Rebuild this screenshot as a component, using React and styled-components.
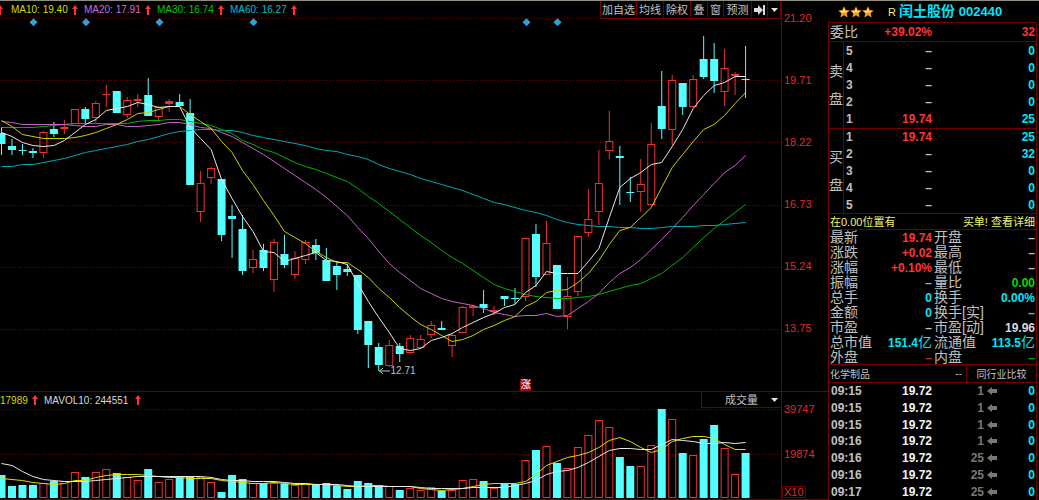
import React from "react";
import styled, { createGlobalStyle } from "styled-components";

const c = {
  line: "#700000",
  red: "#ff3434",
  axis: "#e02a2a",
  cyan: "#00e6fa",
  candle: "#55ffff",
  green: "#00dc00",
  grey: "#c0c0c0",
  dim: "#787878",
  white: "#f4f4f4",
  yellow: "#d8d800",
  note: "#f0f070",
  violet: "#d868d8",
};

const GlobalStyle = createGlobalStyle`
  * { box-sizing: border-box; }
  body {
    margin: 0;
    background: #000;
    color: ${c.grey};
    font-family: "Liberation Sans", "Noto Sans CJK SC", sans-serif;
    font-size: 12px;
  }
  button, select { font: inherit; color: inherit; background: #000; margin: 0; padding: 0; border: 0; border-radius: 0; }
  table { border-collapse: collapse; width: 100%; }
  th, td { padding: 0; text-align: left; font-weight: inherit; }
  dl, dd, dt, h1 { margin: 0; }
`;

/* ---------- data ---------- */

const STEP = 10.48;
const xAt = (i) => 1.5 + STEP * i;

// kind, high, body top, body bottom, low
const candles = [
  ["c", 127, 133, 144, 155], ["c", 139, 146, 150, 155], ["c", 144, 150, 151, 155], ["c", 148, 151, 153, 158],
  ["r", 131, 132, 153, 158], ["c", 122, 129, 134, 137], ["r", 120, 127, 129, 134], ["r", 109, 109, 124, 124],
  ["c", 107, 109, 119, 124], ["r", 101, 103, 118, 123], ["r", 85, 94, 95, 107], ["c", 91, 91, 113, 113],
  ["r", 97, 100, 115, 118], ["r", 94, 99, 101, 107], ["c", 78, 95, 116, 116], ["r", 106, 107, 117, 122],
  ["r", 99, 101, 104, 112], ["c", 94, 102, 106, 106], ["c", 99, 113, 185, 185], ["r", 171, 183, 212, 222],
  ["r", 167, 168, 178, 184], ["c", 179, 179, 235, 241], ["c", 205, 216, 219, 258], ["c", 215, 229, 271, 275],
  ["r", 250, 259, 268, 273], ["c", 244, 250, 268, 271], ["r", 239, 242, 280, 292], ["c", 235, 254, 265, 268],
  ["r", 251, 258, 275, 279], ["r", 240, 242, 260, 264], ["c", 239, 245, 253, 260], ["c", 248, 260, 281, 281],
  ["c", 263, 266, 275, 290], ["c", 264, 269, 272, 276], ["c", 275, 275, 330, 334], ["c", 321, 321, 345, 368],
  ["c", 343, 347, 365, 371], ["r", 340, 345, 366, 367], ["c", 343, 346, 354, 362], ["r", 335, 338, 353, 354],
  ["r", 335, 339, 348, 348], ["r", 321, 325, 335, 338], ["c", 321, 328, 330, 330], ["r", 333, 335, 346, 357],
  ["r", 306, 307, 333, 333], ["r", 305, 306, 308, 316], ["c", 290, 304, 308, 313], ["r", 306, 310, 312, 315],
  ["c", 296, 296, 299, 306], ["c", 288, 298, 299, 304], ["r", 238, 238, 297, 301], ["c", 224, 234, 277, 287],
  ["r", 221, 243, 275, 275], ["c", 265, 265, 309, 309], ["r", 277, 296, 317, 329], ["r", 236, 236, 292, 296],
  ["r", 189, 219, 233, 237], ["r", 150, 183, 212, 225], ["r", 111, 141, 151, 159], ["c", 146, 156, 158, 205],
  ["c", 177, 192, 193, 202], ["r", 159, 184, 192, 212], ["r", 123, 144, 205, 205], ["c", 71, 106, 129, 139],
  ["r", 75, 80, 130, 145], ["c", 83, 83, 107, 115], ["r", 75, 79, 107, 107], ["c", 36, 59, 77, 79],
  ["c", 43, 59, 81, 93], ["r", 49, 68, 92, 106], ["r", 72, 74, 76, 95], ["c", 46, 79, 80, 98],
];

const volumes = [
  475, 486, 485, 485, 483, 481, 481, 472, 477, 472, 469, 473, 477, 480, 469, 482, 479, 476, 477, 477, 482, 492, 475, 479,
  483, 483, 483, 484, 485, 483, 484, 483, 486, 489, 481, 483, 485, 486, 490, 488, 490, 487, 491, 490, 480, 479, 481, 488,
  483, 484, 460, 450, 446, 463, 468, 447, 435, 420, 427, 457, 466, 466, 445, 409, 419, 453, 455, 439, 425, 448, 474, 453,
];

const ma5 = [
  132, 136, 142, 145, 146, 145, 140, 132, 124, 119, 110, 108, 106, 102, 104, 107, 106, 106, 127, 138, 149, 179, 198, 216,
  231, 251, 252, 261, 258, 255, 252, 260, 261, 264, 283, 301, 317, 332, 348, 350, 348, 340, 337, 333, 327, 322, 317, 313,
  307, 304, 292, 285, 271, 273, 273, 273, 261, 248, 217, 187, 178, 172, 164, 162, 146, 129, 108, 95, 85, 82, 76, 76,
];
const ma10 = [
  120, 126, 134, 136, 138, 138, 138, 137, 135, 132, 128, 124, 119, 113, 112, 109, 106, 106, 114, 121, 128, 141, 152, 170,
  184, 200, 215, 231, 237, 243, 251, 257, 262, 262, 269, 277, 288, 297, 307, 316, 324, 329, 335, 341, 339, 335, 329, 325,
  320, 316, 306, 301, 292, 290, 289, 282, 273, 260, 244, 230, 227, 217, 207, 187, 167, 154, 141, 129, 124, 115, 103, 92,
];
const ma20 = [
  121, 122, 124, 124, 124, 124, 124, 125, 126, 126, 124, 124, 126, 126, 125, 124, 122, 122, 124, 127, 128, 132, 136, 142,
  148, 154, 161, 168, 175, 182, 189, 197, 206, 215, 227, 238, 251, 263, 272, 280, 288, 293, 298, 301, 303, 305, 308, 312,
  314, 316, 315, 315, 313, 316, 315, 308, 301, 293, 282, 273, 267, 259, 249, 239, 228, 217, 205, 194, 183, 172, 165, 155,
];
const ma30 = [
  127, 127, 127, 127, 126, 125, 124, 123, 123, 123, 123, 123, 123, 121, 120, 120, 119, 119, 121, 123, 125, 129, 133, 140,
  144, 149, 152, 157, 162, 166, 169, 173, 177, 181, 188, 196, 203, 211, 219, 227, 235, 242, 250, 257, 263, 270, 277, 284,
  288, 291, 294, 296, 297, 298, 298, 297, 296, 294, 291, 288, 285, 283, 278, 273, 265, 257, 247, 237, 228, 220, 212, 204,
];
const ma60 = [
  166, 166, 164, 164, 162, 160, 158, 155, 152, 150, 148, 146, 144, 141, 139, 136, 133, 131, 130, 129, 129, 130, 130, 132,
  135, 137, 139, 141, 143, 145, 148, 150, 151, 154, 156, 159, 164, 168, 171, 174, 178, 181, 184, 187, 190, 194, 198, 202,
  204, 207, 210, 212, 215, 219, 222, 224, 225, 226, 226, 227, 227, 228, 228, 227, 226, 226, 226, 225, 225, 224, 223, 222,
];
const vol5 = [
  478, 479, 480, 482, 483, 484, 483, 480, 480, 477, 475, 474, 474, 474, 475, 476, 477, 477, 478, 478, 478, 480, 481, 482,
  483, 483, 482, 483, 484, 484, 484, 484, 485, 486, 486, 485, 485, 486, 486, 486, 488, 489, 490, 489, 488, 486, 484, 483,
  483, 483, 481, 474, 465, 461, 457, 455, 452, 447, 440, 437, 441, 447, 452, 449, 441, 438, 436, 436, 438, 444, 449, 449,
];
const vol10 = [
  463, 465, 471, 476, 479, 480, 481, 481, 481, 480, 479, 478, 477, 476, 476, 476, 476, 476, 476, 476, 477, 479, 480, 480,
  481, 481, 481, 482, 483, 483, 484, 484, 484, 485, 486, 486, 486, 486, 486, 486, 487, 488, 488, 488, 488, 487, 487, 487,
  487, 485, 483, 480, 474, 471, 470, 467, 462, 456, 450, 448, 448, 449, 449, 444, 439, 440, 441, 443, 443, 442, 443, 442,
];

const points = (ys) => ys.map((y, i) => `${xAt(i).toFixed(1)},${y + 0.5}`).join(" ");

/* ---------- page frame ---------- */

const Page = styled.main`
  display: flex;
  min-height: 100vh;
  border-top: 1px solid #8c8c80;
  padding-right: 2px;
`;

const Charts = styled.div`
  flex: 1;
  min-width: 0;
`;

const ChartSection = styled.section`
  display: grid;
  grid-template-columns: minmax(0, 1fr) 47px;
  border-bottom: 1px solid ${c.line};
`;

const ChartHead = styled.header`
  display: flex;
  justify-content: space-between;
  position: relative;
  z-index: 1;
  height: ${(p) => p.$height}px;
`;

const Plot = styled.div`
  position: relative;
`;

const PlotSvg = styled.svg`
  display: block;
  width: 100%;
  height: ${(p) => p.$height}px;
`;

const Legend = styled.div`
  display: flex;
  align-items: center;
  gap: ${(p) => p.$gap}px;
  font-size: 10px;
  white-space: nowrap;
  overflow: hidden;
`;

const LegendItem = styled.span`
  display: grid;
  grid-template-columns: ${(p) => p.$label || "auto"} 6px;
  align-items: center;
  gap: 3px;
  color: ${(p) => p.$color};
`;

const UpArrow = () => (
  <svg width="6" height="10" viewBox="0 0 6 10" aria-hidden="true">
    <path d="M3 0L6 4H4V10H2V4H0Z" fill={c.red} />
  </svg>
);

const LeadArrow = styled.span`
  display: flex;
  margin-left: -3px;
  margin-right: 2px;
`;

const Toolbar = styled.nav`
  display: flex;
  height: 18px;
  border: 1px solid ${c.line};
  border-top: 0;
  border-right: 0;
  background: #000;
`;

const ToolButton = styled.button`
  display: flex;
  align-items: center;
  justify-content: center;
  width: ${(p) => p.$width}px;
  border-right: 1px solid ${c.line};
  font-size: 11px;
  line-height: 16px;
  white-space: nowrap;
`;

const Axis = styled.div`
  display: flex;
  flex-direction: column;
  align-items: flex-start;
  justify-content: ${(p) => (p.$spread ? "space-between" : "flex-start")};
  gap: ${(p) => (p.$spread ? 0 : 25)}px;
  padding: ${(p) => (p.$spread ? "11px 0 56px 2px" : "11px 0 1px 0")};
  border-left: 1px solid ${c.line};
  color: ${c.axis};
  font-size: 11px;
  line-height: 13px;
`;

const VolumeScale = styled.div`
  display: grid;
  gap: 32px;
  padding-left: 2px;
`;

const Unit = styled.span`
  border: 1px solid ${c.line};
  line-height: 10px;
  padding: 0 1px;
`;

const LowLabel = styled.span`
  position: absolute;
  left: 50%;
  top: 347px;
  font-size: 10px;
  line-height: 12px;
`;

const RiseBadge = styled.span`
  position: absolute;
  left: 66.6%;
  top: 361px;
  width: 11px;
  height: 12px;
  background: #a00c0c;
  color: #fff;
  font-size: 10px;
  line-height: 11px;
  text-align: center;
`;

const Picker = styled.label`
  display: grid;
  grid-template-columns: 1fr auto;
  align-items: center;
  width: 80px;
  padding: 0 3px 0 23px;
  border-left: 1px solid ${c.line};
  border-bottom: 1px solid ${c.line};
`;

const PickerSelect = styled.select`
  appearance: none;
  font-size: 11px;
  line-height: 14px;
  height: 15px;
`;

const DownTriangle = () => (
  <svg width="7" height="4" viewBox="0 0 7 4" aria-hidden="true">
    <path d="M0 0H7L3.5 4Z" fill="#e0e0e0" />
  </svg>
);

const GridLines = ({ ys }) =>
  ys.map((y) => <path key={y} d={`M0 ${y}.5H781`} stroke="#800000" strokeDasharray="1 2" />);

const Candle = ({ i, data: [kind, high, top, bottom, low] }) => {
  const x = xAt(i);
  const color = kind === "c" ? c.candle : "#f03030";
  const thin = bottom - top < 4;
  return (
    <g stroke={color} fill="none">
      {high < top && <path d={`M${x} ${high}V${top}`} />}
      {low > bottom && <path d={`M${x} ${bottom}V${low}`} />}
      {kind === "c" || thin ? (
        <rect x={x - 4} y={top} width="8" height={bottom - top} fill={color} stroke="none" />
      ) : (
        <rect x={x - 3.5} y={top + 0.5} width="7" height={bottom - top - 1} />
      )}
    </g>
  );
};

const VolumeBar = ({ i, top }) => {
  const x = xAt(i);
  return candles[i][0] === "c" ? (
    <rect x={x - 4} y={top} width="8" height={498 - top} fill={c.candle} />
  ) : (
    <rect x={x - 3.5} y={top + 0.5} width="7" height={497 - top} fill="none" stroke="#f03030" />
  );
};

const Line = ({ ys, color }) => <polyline points={points(ys)} fill="none" stroke={color} strokeWidth="1" />;

const tools = [
  ["加自选", 36], ["均线", 27], ["除权", 27], ["叠", 17], ["窗", 16], ["预测", 28],
];

const averages = [
  ["MA10: 19.40", c.yellow], ["MA20: 17.91", c.violet], ["MA30: 16.74", "#00c800"], ["MA60: 16.27", "#00bcd0"],
];

const PriceChart = () => (
  <ChartSection>
    <div>
      <ChartHead $height={17}>
        <Legend $gap={6}>
          <LeadArrow><UpArrow /></LeadArrow>
          {averages.map(([text, color]) => (
            <LegendItem key={text} $color={color} $label="58px">{text}<UpArrow /></LegendItem>
          ))}
        </Legend>
        <Toolbar>
          {tools.map(([text, width]) => <ToolButton key={text} $width={width}>{text}</ToolButton>)}
          <ToolButton $width={16} aria-label="隐藏">
            <svg width="11" height="10" viewBox="0 0 11 10" aria-hidden="true">
              <path d="M0 3H4V0L9 5L4 10V7H0Z M9 0H11V10H9Z" fill="#dcdcdc" />
            </svg>
          </ToolButton>
          <ToolButton $width={13} aria-label="更多"><DownTriangle /></ToolButton>
        </Toolbar>
      </ChartHead>
      <Plot>
        <PlotSvg $height={373} viewBox="0 18 781 373" preserveAspectRatio="none" role="img" aria-label="日K线">
          <GridLines ys={[18, 80, 142, 205, 267, 329]} />
          {[33.5, 86, 159.5, 253.5, 526.5, 557.5].map((x) => (
            <path key={x} d={`M${x - 4} 22.3L${x} 18.3L${x + 4} 22.3L${x} 26.3Z`} fill="#2ea2d8" />
          ))}
          {candles.map((data, i) => <Candle key={i} i={i} data={data} />)}
          <Line ys={ma60} color="#00a8bc" />
          <Line ys={ma30} color="#00b400" />
          <Line ys={ma20} color="#c860c8" />
          <Line ys={ma10} color="#d0d000" />
          <Line ys={ma5} color="#e8e8e8" />
          <path d="M379.500 371H390M383 368L379.500 371L383 374" stroke={c.grey} fill="none" />
        </PlotSvg>
        <LowLabel>12.71</LowLabel>
        <RiseBadge>涨</RiseBadge>
      </Plot>
    </div>
    <Axis $spread>
      {["21.20", "19.71", "18.22", "16.73", "15.24", "13.75"].map((v) => <span key={v}>{v}</span>)}
    </Axis>
  </ChartSection>
);

const VolumeChart = () => (
  <ChartSection>
    <div>
      <ChartHead $height={16}>
        <Legend $gap={6}>
          <LegendItem $color={c.yellow} $label="29px">17989<UpArrow /></LegendItem>
          <LegendItem $color="#d8d8d8" $label="88px">MAVOL10: 244551<UpArrow /></LegendItem>
        </Legend>
        <Picker>
          <PickerSelect aria-label="指标" defaultValue="成交量"><option>成交量</option></PickerSelect>
          <DownTriangle />
        </Picker>
      </ChartHead>
      <PlotSvg $height={90} viewBox="0 408 781 90" preserveAspectRatio="none" role="img" aria-label="成交量">
        <GridLines ys={[409, 454]} />
        {volumes.map((top, i) => <VolumeBar key={i} i={i} top={top} />)}
        <Line ys={vol5} color="#e0e000" />
        <Line ys={vol10} color="#e8e8e8" />
      </PlotSvg>
    </div>
    <Axis>
      <VolumeScale><span>39747</span><span>19874</span></VolumeScale>
      <Unit>X10</Unit>
    </Axis>
  </ChartSection>
);

/* ---------- quote panel ---------- */

const Panel = styled.aside`
  display: flex;
  flex-direction: column;
  width: 209px;
`;

const Title = styled.header`
  display: flex;
  align-items: center;
  height: 21px;
  padding-left: 10px;
  color: ${c.cyan};
`;

const Margin = styled.span`
  margin: 0 3px 0 14px;
  color: ${c.note};
  font-size: 11px;
`;

const Name = styled.h1`
  font-size: 14px;
  line-height: 20px;
  white-space: nowrap;
`;

const Code = styled.span`
  font-size: 13px;
`;

const Frame = styled.div`
  flex: 1;
  display: flex;
  flex-direction: column;
  border: 1px solid ${c.line};
  border-bottom: 0;
`;

const Num = styled.span`
  color: ${(p) => p.$color || c.grey};
  font-weight: bold;
  font-size: 12px;
  line-height: 14px;
`;

const Unit100M = styled.span`
  font-weight: normal;
  font-size: 14px;
`;

const Ratio = styled.div`
  display: grid;
  grid-template-columns: 32px 70px 1fr;
  align-items: center;
  height: 19px;
  padding: 0 1px;
  border-bottom: 1px solid ${c.line};
  font-size: 14px;
  line-height: 16px;
  text-align: right;
`;

const Caption = styled.span`
  text-align: left;
`;

const BookSide = styled.section`
  display: grid;
  grid-template-columns: 15px 1fr;
  height: ${(p) => p.$height}px;
  border-bottom: 1px solid ${c.line};
`;

const SideName = styled.div`
  display: flex;
  flex-direction: column;
  align-items: center;
  justify-content: center;
  gap: 12px;
  border-right: 1px solid ${c.line};
  font-size: 14px;
  line-height: 16px;
`;

const Cell = styled.td`
  width: ${(p) => (p.$width ? `${p.$width}px` : "auto")};
  padding: 0 1px 0 2px;
  text-align: ${(p) => p.$align || "right"};
  line-height: 14px;
`;

const Notice = styled.div`
  display: flex;
  justify-content: space-between;
  align-items: center;
  height: 16px;
  padding: 0 1px;
  border-bottom: 1px solid ${c.line};
  color: ${c.note};
  font-size: 11px;
  line-height: 14px;
  white-space: nowrap;
`;

const Stats = styled.dl`
  display: grid;
  grid-template-columns: 102px 1fr;
  grid-template-rows: repeat(9, 1fr);
  column-gap: 2px;
  height: 135px;
  padding: 0 1px;
  border-bottom: 1px solid ${c.line};
`;

const Stat = styled.div`
  display: flex;
  justify-content: space-between;
  align-items: center;
  height: 15px;
  font-size: 14px;
  line-height: 15px;
  white-space: nowrap;
`;

const Industry = styled.div`
  display: grid;
  grid-template-columns: 1fr auto 70px;
  align-items: center;
  height: 18px;
  border-bottom: 1px solid ${c.line};
  padding-left: 1px;
  font-size: 10px;
`;

const Change = styled.span`
  padding-right: 4px;
`;

const PeerButton = styled.button`
  height: 17px;
  border-left: 1px solid ${c.line};
  font-size: 10px;
`;

const Trades = styled.table`
  flex: 1;
  height: 117px;
`;

const Star = () => (
  <svg width="12" height="12" viewBox="0 0 12 12" aria-hidden="true">
    <path d="M6 .3L7.7 4.100 11.800 4.500 8.700 7.300 9.600 11.500 6 9.300 2.400 11.500 3.300 7.300 .2 4.500 4.300 4.100Z" fill="#f0a01c" />
    <path d="M6 1.800L7 4.900 10 5.200 7.500 6.600 6 6.300 3.500 7 2 5.200 5 4.900Z" fill="#ffe08a" />
  </svg>
);

const LeftArrow = () => (
  <svg width="10" height="8" viewBox="0 0 10 8" role="img" aria-label="平">
    <path d="M0 4L5 0V2H10V6H5V8Z" fill={c.dim} />
  </svg>
);

const sells = [["5"], ["4"], ["3"], ["2"], ["1", "19.74", "25"]];
const buys = [["1", "19.74", "25"], ["2", "–", "32"], ["3"], ["4"], ["5"]];

const Book = ({ names, rows, height }) => (
  <BookSide $height={height}>
    <SideName>{names.map((n) => <span key={n}>{n}</span>)}</SideName>
    <table>
      <tbody>
        {rows.map(([level, price = "–", amount = "0"]) => (
          <tr key={level}>
            <Cell as="th" scope="row" $width={20} $align="left"><Num>{level}</Num></Cell>
            <Cell $width={69}><Num $color={price === "–" ? c.grey : c.red}>{price}</Num></Cell>
            <Cell><Num $color={c.cyan}>{amount}</Num></Cell>
          </tr>
        ))}
      </tbody>
    </table>
  </BookSide>
);

const stats = [
  ["最新", "19.74", c.red], ["开盘", "–", c.grey],
  ["涨跌", "+0.02", c.red], ["最高", "–", c.grey],
  ["涨幅", "+0.10%", c.red], ["最低", "–", c.grey],
  ["振幅", "–", c.cyan], ["量比", "0.00", c.green],
  ["总手", "0", c.cyan], ["换手", "0.00%", c.cyan],
  ["金额", "0", c.cyan], ["换手[实]", "–", c.cyan],
  ["市盈", "–", c.grey], ["市盈[动]", "19.96", "#d8d8d8"],
  ["总市值", "151.4", c.cyan, "亿"], ["流通值", "113.5", c.cyan, "亿"],
  ["外盘", "–", "#d02828"], ["内盘", "–", "#00a800"],
];

const trades = [
  ["09:15", 1], ["09:15", 1], ["09:15", 1], ["09:16", 1], ["09:16", 25], ["09:16", 25], ["09:17", 25],
];

const QuotePanel = () => (
  <Panel>
    <Title>
      <Star /><Star /><Star />
      <Margin>R</Margin>
      <Name>闰土股份 <Code>002440</Code></Name>
    </Title>
    <Frame>
      <Ratio>
        <Caption>委比</Caption>
        <Num $color={c.red}>+39.02%</Num>
        <Num $color={c.red}>32</Num>
      </Ratio>
      <Book names={["卖", "盘"]} rows={sells} height={87} />
      <Book names={["买", "盘"]} rows={buys} height={85} />
      <Notice><span>在0.00位置有</span><span>买单! 查看详细</span></Notice>
      <Stats>
        {stats.map(([name, value, color, unit]) => (
          <Stat key={name}>
            <dt>{name}</dt>
            <Num as="dd" $color={color}>{value}{unit && <Unit100M>{unit}</Unit100M>}</Num>
          </Stat>
        ))}
      </Stats>
      <Industry>
        <span>化学制品</span>
        <Change>--</Change>
        <PeerButton>同行业比较</PeerButton>
      </Industry>
      <Trades>
        <tbody>
          {trades.map(([time, amount], i) => (
            <tr key={i}>
              <Cell $width={40} $align="left"><Num>{time}</Num></Cell>
              <Cell $width={64}><Num $color={c.white}>19.72</Num></Cell>
              <Cell $width={52}><Num $color={c.dim}>{amount}</Num></Cell>
              <Cell $width={14} $align="left"><LeftArrow /></Cell>
              <Cell><Num $color={c.cyan}>0</Num></Cell>
            </tr>
          ))}
        </tbody>
      </Trades>
    </Frame>
  </Panel>
);

export default function App() {
  return (
    <>
      <GlobalStyle />
      <Page>
        <Charts>
          <PriceChart />
          <VolumeChart />
        </Charts>
        <QuotePanel />
      </Page>
    </>
  );
}
